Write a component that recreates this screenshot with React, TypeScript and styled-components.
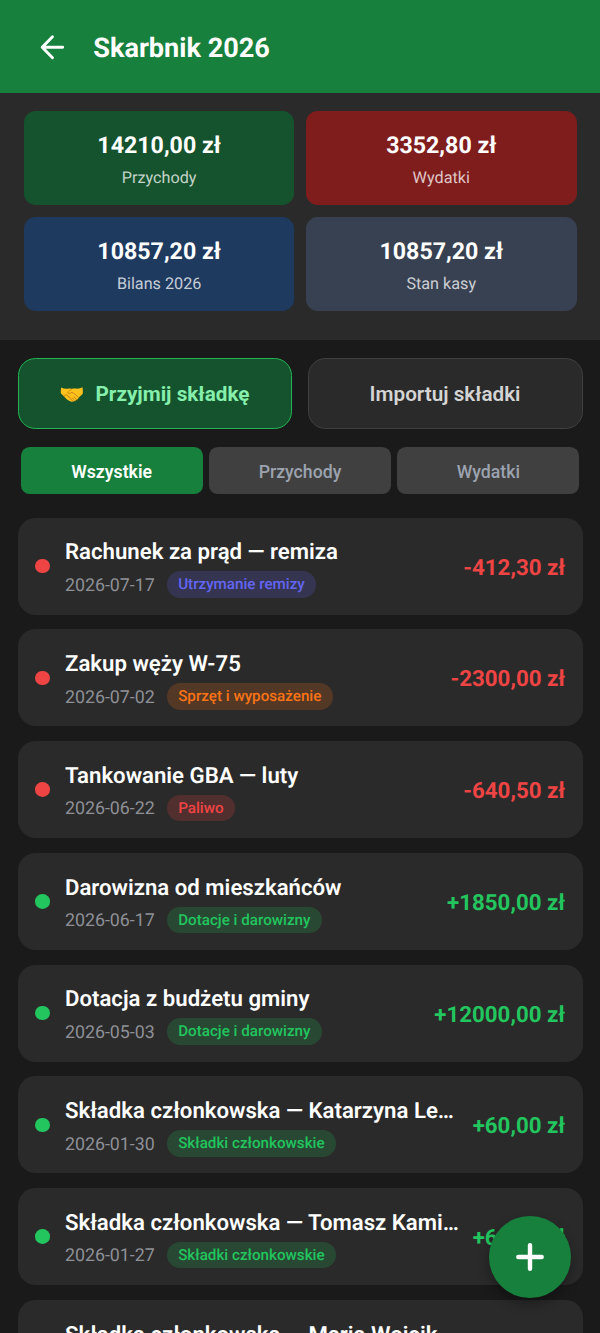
import React from "react";
import styled, { createGlobalStyle } from "styled-components";

const GlobalStyle = createGlobalStyle`
  * { box-sizing: border-box; }
  html, body { margin: 0; padding: 0; background: #1a1a1a; }
  body { font-family: Roboto, "Noto Sans", sans-serif; text-rendering: geometricPrecision; }
  button { font-family: inherit; padding: 0; margin: 0; cursor: pointer; }
`;

const Screen = styled.div`
  position: relative;
  width: 600px;
  height: 1333px;
  overflow: hidden;
  display: flex;
  flex-direction: column;
  background: #1a1a1a;
  color: #fff;
`;

const Header = styled.header`
  flex: none;
  height: 93.4px;
  padding: 1px 0 0 35px;
  display: flex;
  align-items: center;
  gap: 23.3px;
  background: #16803c;
`;

const BackButton = styled.button`
  width: 35px;
  height: 35px;
  border: 0;
  background: none;
  color: #fff;
  display: flex;
`;

const Title = styled.h1`
  margin: 0;
  padding-top: 1px;
  font-size: 27.1px;
  line-height: 32px;
  font-weight: 700;
`;

const Summary = styled.section`
  flex: none;
  height: 246.6px;
  padding: 17.6px 23.5px 0 23.9px;
  display: grid;
  grid-template-columns: 1fr 1fr;
  grid-auto-rows: 94px;
  gap: 11.7px;
  background: #2a2a2a;
`;

const StatCard = styled.div<{ $bg: string }>`
  display: flex;
  flex-direction: column;
  align-items: center;
  padding-top: 20px;
  gap: 5px;
  border-radius: 11.7px;
  background: ${(p) => p.$bg};
`;

const StatValue = styled.div`
  font-size: 23.2px;
  line-height: 28px;
  font-weight: 700;
`;

const StatLabel = styled.div`
  font-size: 16.2px;
  line-height: 27px;
  color: rgba(255, 255, 255, 0.75);
`;

const Actions = styled.div`
  flex: none;
  display: grid;
  grid-template-columns: 1fr 1fr;
  gap: 15.2px;
  padding: 17.6px 17.5px 0;
`;

const ActionButton = styled.button<{ $primary?: boolean }>`
  height: 71.5px;
  display: flex;
  align-items: center;
  justify-content: center;
  gap: 11.5px;
  padding-top: 2px;
  border-radius: 17.5px;
  border: 1.5px solid ${(p) => (p.$primary ? "#22b455" : "#404040")};
  background: ${(p) => (p.$primary ? "#14532d" : "#2a2a2a")};
  color: ${(p) => (p.$primary ? "#86efac" : "#d4d4d4")};
  font-size: 20.7px;
  font-weight: ${(p) => (p.$primary ? 700 : 600)};
`;

const Filters = styled.div`
  flex: none;
  display: grid;
  grid-template-columns: repeat(3, 1fr);
  gap: 6px;
  padding: 17.9px 20.5px 0;
`;

const FilterTab = styled.button<{ $active?: boolean }>`
  height: 47px;
  padding-top: 3px;
  border: 0;
  border-radius: 8.8px;
  background: ${(p) => (p.$active ? "#16803c" : "#404040")};
  color: ${(p) => (p.$active ? "#fff" : "#9ca3af")};
  font-size: 17.7px;
  font-weight: ${(p) => (p.$active ? 600 : 500)};
`;

const List = styled.div`
  display: flex;
  flex-direction: column;
  gap: 14.6px;
  padding: 23.6px 17.5px 0;
`;

const Entry = styled.article`
  flex: none;
  height: 97.15px;
  padding: 0 17.3px 0 17.9px;
  display: flex;
  align-items: center;
  border-radius: 17.5px;
  background: #2a2a2a;
`;

const Dot = styled.span<{ $color: string }>`
  flex: none;
  width: 14.6px;
  height: 14.6px;
  margin-right: 15px;
  border-radius: 50%;
  background: ${(p) => p.$color};
`;

const EntryBody = styled.div`
  flex: 1;
  min-width: 0;
  display: flex;
  flex-direction: column;
  padding-top: 3px;
`;

const EntryTitle = styled.div`
  font-size: 22.2px;
  line-height: 30px;
  font-weight: 600;
  white-space: nowrap;
  overflow: hidden;
  text-overflow: ellipsis;
`;

const Meta = styled.div`
  display: flex;
  align-items: center;
  gap: 11.9px;
  margin-top: 4px;
`;

const EntryDate = styled.span`
  font-size: 17.8px;
  line-height: 24px;
  padding-top: 2.5px;
  color: #8e9096;
`;

const Badge = styled.span<{ $color: string }>`
  height: 26.5px;
  padding: 0 11.5px;
  border-radius: 13.3px;
  font-size: 15.2px;
  line-height: 27.5px;
  font-weight: 500;
  color: ${(p) => p.$color};
  background: ${(p) => p.$color}33;
`;

const Amount = styled.div<{ $color: string }>`
  flex: none;
  margin-left: 11.7px;
  padding-top: 3px;
  font-size: 22.3px;
  font-weight: 700;
  color: ${(p) => p.$color};
`;

const AddButton = styled.button`
  position: absolute;
  right: 29px;
  bottom: 35px;
  width: 82px;
  height: 82px;
  border: 0;
  border-radius: 50%;
  background: #16803c;
  color: #fff;
  display: flex;
  align-items: center;
  justify-content: center;
  box-shadow: 0 6px 12px rgba(0, 0, 0, 0.32);
`;

const ArrowIcon = () => (
  <svg width="35" height="35" viewBox="0 0 35 35" fill="none" stroke="currentColor" strokeWidth="2.9" strokeLinecap="round" strokeLinejoin="round">
    <path d="M27.7 17.2H7.2M17.500 6.700L7.200 17.200l10.300 10.500" />
  </svg>
);

const PlusIcon = () => (
  <svg width="28" height="28" viewBox="0 0 28 28" fill="none" stroke="currentColor" strokeWidth="4.4" strokeLinecap="round">
    <path d="M14 2.3v23.4M2.3 14h23.4" />
  </svg>
);

const HandshakeIcon = () => (
  <svg width="23.500" height="17" viewBox="0 0 24 18" preserveAspectRatio="none" fill="none">
    <path
      d="M1.200 1.600C.9 3.400.7 5.600.8 7.700c1.100 1.300 2 1.900 3 3 1.800 2.300 4.600 5.300 7.700 6 .8.200 1.500-.1 2-.6.700.3 1.500 0 1.900-.6.800.1 1.500-.4 1.800-1.100.9 0 1.600-.7 1.700-1.600 1.500-1.800 3.200-2.900 4.300-4.500.3-2.200.2-4.600-.2-6.900-2 1.300-4.900 1.700-7 1.300-1.400-.2-2.700-.3-4 .4-1.500-.6-2.600-.5-4-.3-2.400.3-4.800-.1-6.800-1.200z"
      fill="#fcc21b"
    />
    <path
      d="M12 3.100C10.300 4.200 8.600 5.700 8 7.400c1.100 1 2.700.5 4.200-.8 2.500 1.800 5 3.400 6.700 5.700M4.300 10.700l1.900-1.500c.9-.3 1.400.5 1.100 1.200.9-.4 1.800.3 1.500 1.300.9-.3 1.700.5 1.300 1.400.9-.1 1.500.7 1.200 1.500M13.500 16.100l-1.800-1.500M15.400 15.500l-2.800-2.600M17.200 14.400l-3-2.900"
      stroke="#c77d16"
      strokeWidth="0.9"
      strokeLinecap="round"
      strokeLinejoin="round"
    />
  </svg>
);

const RED = "#ef4444";
const GREEN = "#22c55e";

const stats = [
  { value: "14210,00 zł", label: "Przychody", bg: "#14532d" },
  { value: "3352,80 zł", label: "Wydatki", bg: "#7f1d1d" },
  { value: "10857,20 zł", label: "Bilans 2026", bg: "#1e3a5f" },
  { value: "10857,20 zł", label: "Stan kasy", bg: "#374151" },
];

const entries = [
  { title: "Rachunek za prąd — remiza", date: "2026-07-17", tag: "Utrzymanie remizy", tagColor: "#6366f1", amount: "-412,30 zł" },
  { title: "Zakup węży W-75", date: "2026-07-02", tag: "Sprzęt i wyposażenie", tagColor: "#f97316", amount: "-2300,00 zł" },
  { title: "Tankowanie GBA — luty", date: "2026-06-22", tag: "Paliwo", tagColor: "#ef4444", amount: "-640,50 zł" },
  { title: "Darowizna od mieszkańców", date: "2026-06-17", tag: "Dotacje i darowizny", tagColor: "#22c55e", amount: "+1850,00 zł" },
  { title: "Dotacja z budżetu gminy", date: "2026-05-03", tag: "Dotacje i darowizny", tagColor: "#22c55e", amount: "+12000,00 zł" },
  { title: "Składka członkowska — Katarzyna Lewandowska", date: "2026-01-30", tag: "Składki członkowskie", tagColor: "#22c55e", amount: "+60,00 zł" },
  { title: "Składka członkowska — Tomasz Kamiński", date: "2026-01-27", tag: "Składki członkowskie", tagColor: "#22c55e", amount: "+60,00 zł" },
  { title: "Składka członkowska — Maria Wojcik", date: "2026-01-25", tag: "Składki członkowskie", tagColor: "#22c55e", amount: "+60,00 zł" },
];

export default function App() {
  return (
    <>
      <GlobalStyle />
      <Screen>
        <Header>
          <BackButton aria-label="Wstecz"><ArrowIcon /></BackButton>
          <Title>Skarbnik 2026</Title>
        </Header>
        <Summary>
          {stats.map((s) => (
            <StatCard key={s.label} $bg={s.bg}>
              <StatValue>{s.value}</StatValue>
              <StatLabel>{s.label}</StatLabel>
            </StatCard>
          ))}
        </Summary>
        <Actions>
          <ActionButton $primary><HandshakeIcon />Przyjmij składkę</ActionButton>
          <ActionButton>Importuj składki</ActionButton>
        </Actions>
        <Filters>
          <FilterTab $active>Wszystkie</FilterTab>
          <FilterTab>Przychody</FilterTab>
          <FilterTab>Wydatki</FilterTab>
        </Filters>
        <List>
          {entries.map((e) => {
            const color = e.amount.startsWith("-") ? RED : GREEN;
            return (
              <Entry key={e.title}>
                <Dot $color={color} />
                <EntryBody>
                  <EntryTitle>{e.title}</EntryTitle>
                  <Meta>
                    <EntryDate>{e.date}</EntryDate>
                    <Badge $color={e.tagColor}>{e.tag}</Badge>
                  </Meta>
                </EntryBody>
                <Amount $color={color}>{e.amount}</Amount>
              </Entry>
            );
          })}
        </List>
        <AddButton aria-label="Dodaj"><PlusIcon /></AddButton>
      </Screen>
    </>
  );
}
